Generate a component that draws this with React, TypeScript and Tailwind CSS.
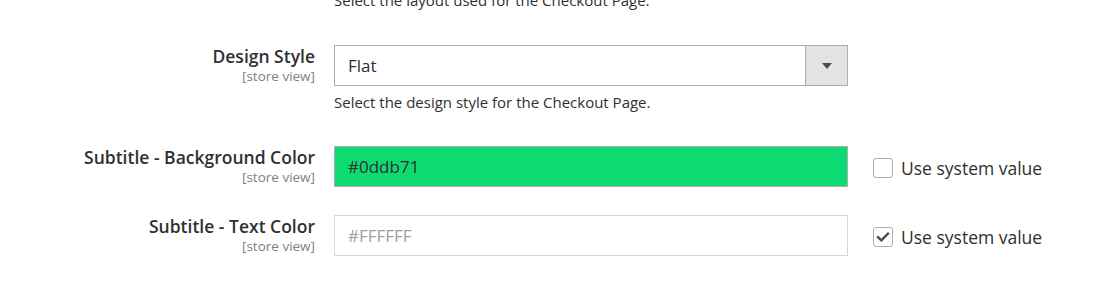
import React from "react";

function Label({ title }: { title: string }) {
  return (
    <div className="flex flex-col items-end">
      <span className="text-[17.5px] leading-[22px] font-semibold text-[#303030]">{title}</span>
      <span className="text-[13.5px] leading-[18px] text-[#808080]">[store view]</span>
    </div>
  );
}

function Checkbox({ checked, label }: { checked?: boolean; label: string }) {
  return (
    <label className="self-start flex items-center gap-[8px] pt-[12px] pl-[6px]">
      <span className="w-[20px] h-[20px] border border-[#adadad] rounded-[3px] bg-white flex items-center justify-center">
        {checked && (
          <svg width="14" height="14" viewBox="0 0 14 14" fill="none">
            <path d="M2 7.2 L5.4 10.4 L12 3.6" stroke="#514943" strokeWidth="2.4" strokeLinecap="square" />
          </svg>
        )}
      </span>
      <span className="text-[17.5px] leading-[20px] text-[#303030]">{label}</span>
    </label>
  );
}

export default function App() {
  return (
    <div className="w-[1114px] h-[281px] overflow-hidden bg-white" style={{ fontFamily: "'Open Sans', sans-serif" }}>
      {/* layout note (previous row) */}
      <div className="grid grid-cols-[315px_514px_auto] gap-x-[19px]">
        <div />
        <p className="-mt-[10px] text-[15px] leading-[20px] text-[#303030]">Select the layout used for the Checkout Page.</p>
        <div />
      </div>

      {/* design style */}
      <div className="grid grid-cols-[315px_514px_auto] gap-x-[19px] mt-[35px]">
        <Label title="Design Style" />
        <div>
          <div className="h-[41px] border border-[#adadad] bg-white flex">
            <div className="flex-1 pl-[13px] flex items-center text-[17px] text-[#303030]">Flat</div>
            <div className="w-[42px] bg-[#e3e3e3] border-l border-[#adadad] flex items-center justify-center">
              <svg width="10" height="6" viewBox="0 0 10 6">
                <path d="M0 0 H10 L5 6 Z" fill="#514943" />
              </svg>
            </div>
          </div>
          <p className="mt-[6px] text-[15px] leading-[20px] text-[#303030]">Select the design style for the Checkout Page.</p>
        </div>
        <div />
      </div>

      {/* background color */}
      <div className="grid grid-cols-[315px_514px_auto] gap-x-[19px] mt-[34px]">
        <Label title="Subtitle - Background Color" />
        <div className="h-[41px] border border-[#adadad] bg-[#0ddb71] pl-[13px] flex items-center text-[17px] text-[#303030]">
          #0ddb71
        </div>
        <Checkbox label="Use system value" />
      </div>

      {/* text color */}
      <div className="grid grid-cols-[315px_514px_auto] gap-x-[19px] mt-[28px]">
        <Label title="Subtitle - Text Color" />
        <div className="h-[41px] border border-[#d6d6d6] bg-white pl-[13px] flex items-center text-[17px] text-[#a0a0a0]">
          #FFFFFF
        </div>
        <Checkbox checked label="Use system value" />
      </div>
    </div>
  );
}
